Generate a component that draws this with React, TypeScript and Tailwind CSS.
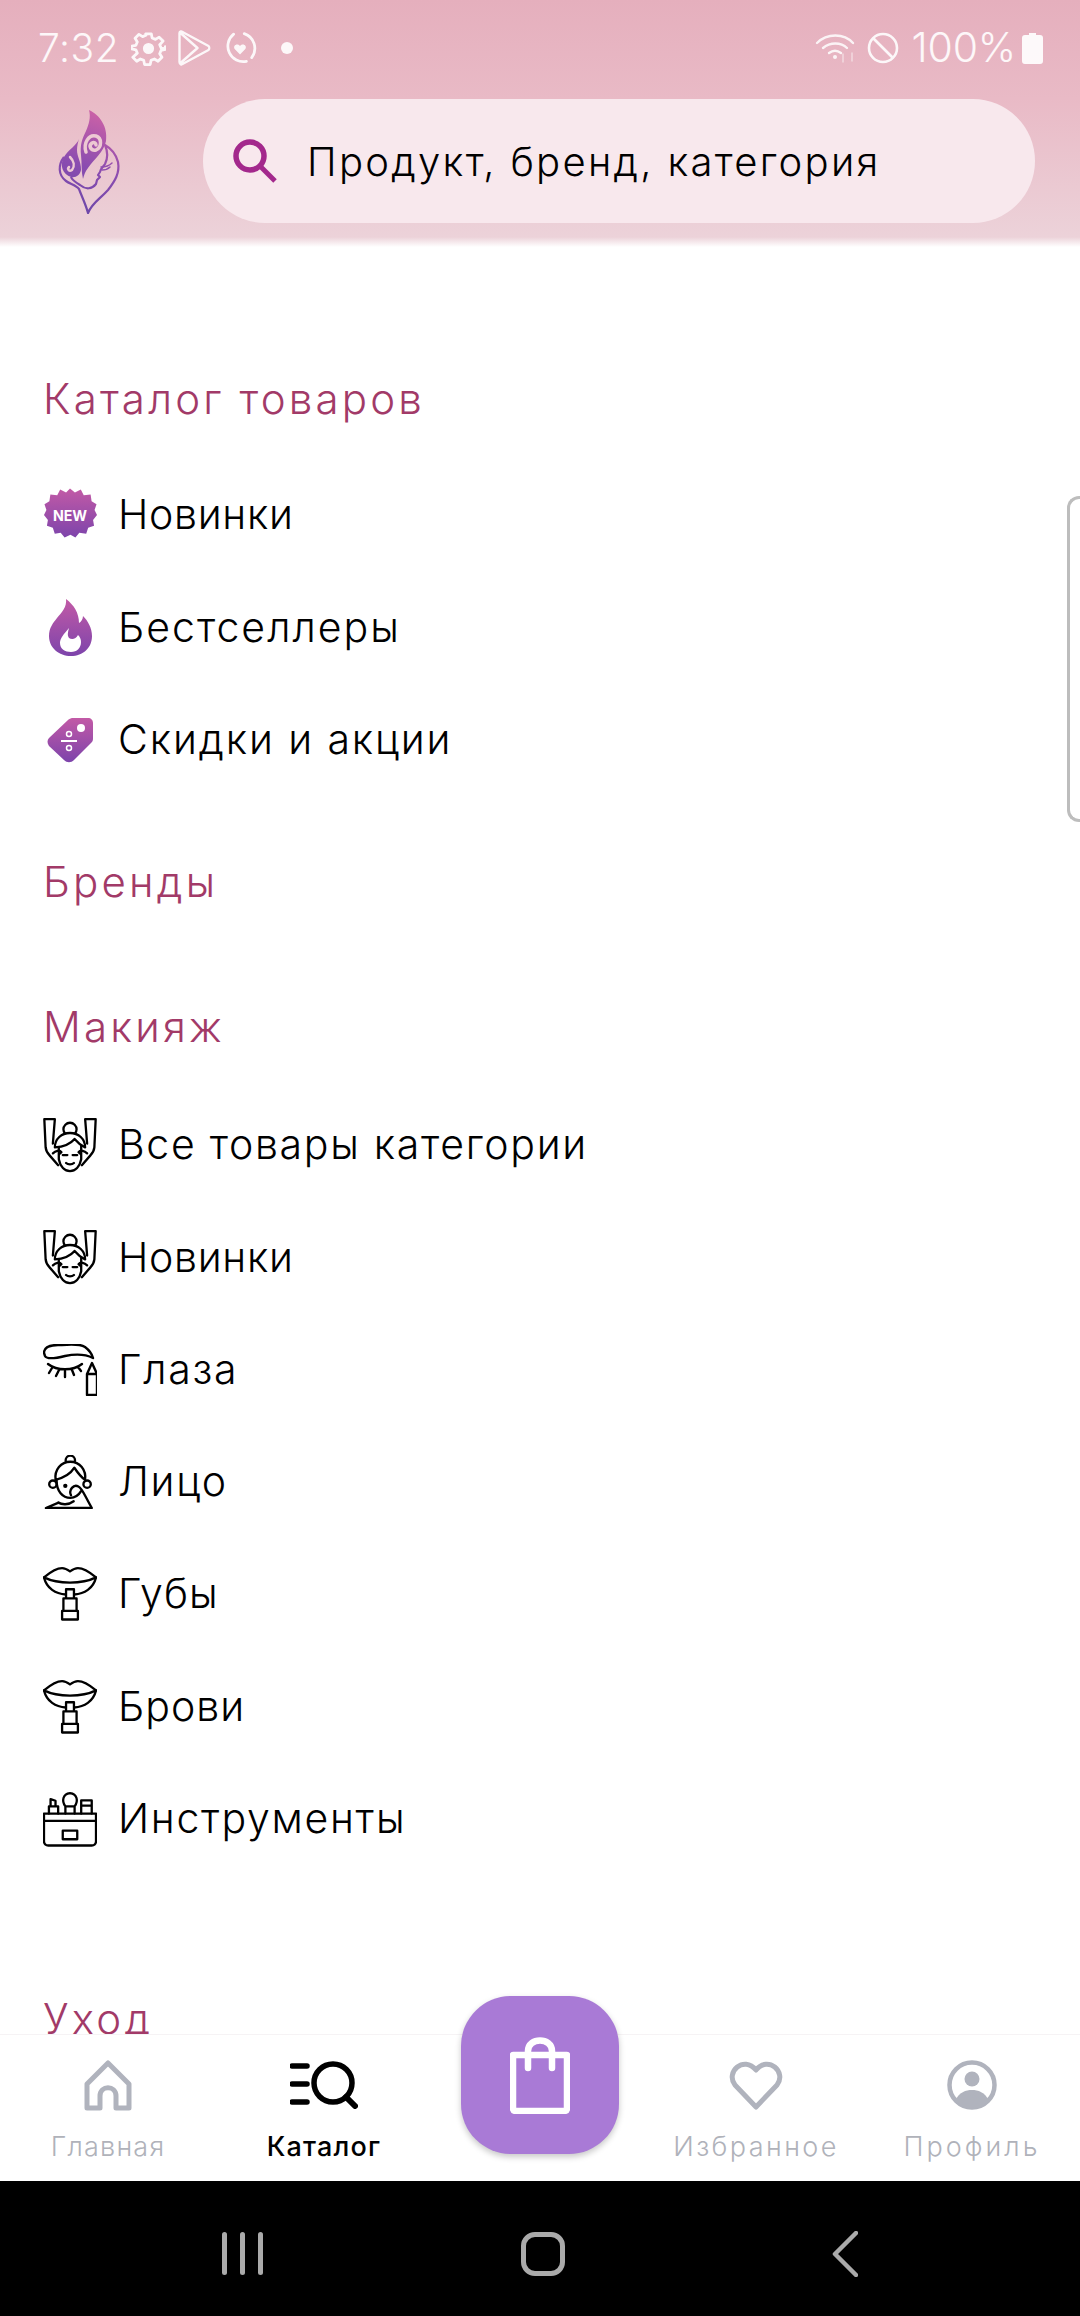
import type { ReactNode } from "react";

const FONT = "font-['Inter','Noto_Sans',sans-serif]";

function Gradient({ id }: { id: string }) {
  return (
    <defs>
      <linearGradient id={id} x1="0" y1="0" x2="0" y2="1">
        <stop offset="0" stopColor="#c25aa6" />
        <stop offset="1" stopColor="#7d44ab" />
      </linearGradient>
    </defs>
  );
}

function Logo() {
  return (
    <svg width="75" height="112" viewBox="0 0 75 112" fill="none" aria-hidden>
      <defs>
        <linearGradient id="logo" gradientUnits="userSpaceOnUse" x1="55" y1="5" x2="20" y2="108">
          <stop offset="0" stopColor="#d163a6" />
          <stop offset="0.55" stopColor="#8a4cb0" />
          <stop offset="1" stopColor="#6a47a8" />
        </linearGradient>
      </defs>
      {/* upper flame */}
      <path fill="url(#logo)" d="M39 5C50 10 58 22 56 36 54 47 44 54 38 63 35 67 34 70 33 74 31 66 32 58 31 50 30 40 32 34 36 26 39 19 41 12 39 5z" />
      <path stroke="#edc9d3" strokeWidth="3.500" strokeLinecap="round" d="M36 47C33 38 39 29 46 31 52 33 52 42 46 45 41 46 38 41 42 38 44 37 46 38 46 40" />
      {/* left petal */}
      <path fill="url(#logo)" d="M29 34C27 40 18 45 14 52 9 61 13 69 21 72 26 73 30 70 31 65 31 56 27 52 27 45 27 41 28 37 29 34z" />
      <path stroke="#edc9d3" strokeWidth="2.500" strokeLinecap="round" d="M20 52C24 56 25 61 22 65 19 67 17 64 19 62" />
      {/* outline and face */}
      <path stroke="url(#logo)" strokeWidth="2.200" strokeLinejoin="round" d="M14 52C8 60 8 70 16 76 20 79 26 80 29 84 32 92 36 100 38 108 42 98 50 94 58 85 65 76 70 68 68 57 66 49 62 44 55 40 58 47 58 53 55 59 53 62 50 64 50 67L48 70 50 72 47 75 46 79C42 84 36 85 30 80 25 77 22 75 21 72" />
      <path stroke="url(#logo)" strokeWidth="1.500" strokeLinecap="round" d="M51 62C55 62 59 61 62 58M52 65C55 65 58 64 60 62" />
    </svg>
  );
}

function Massage() {
  return (
    <svg width="55" height="56" viewBox="0 0 164 165" fill="none" stroke="#000" strokeWidth="7" strokeLinejoin="round" strokeLinecap="round" aria-hidden>
      <path d="M4 4h32l-6 74 M4 4l4 86c1 10 6 18 12 24l26 30 M160 4h-32l6 74 M160 4l-4 86c-1 10-6 18-12 24l-26 30" />
      <path d="M30 108c8-8 20-12 26 -4l-6 6 M134 108c-8-8-20-12-26-4l6 6" />
      <circle cx="82" cy="35" r="20" fill="#fff" />
      <path fill="#fff" d="M36 90c0-26 20-44 46-44s46 18 46 44c-12-6-22-14-32-26-12 14-34 24-60 26z" />
      <path d="M48 92v34c4 22 18 36 34 36s30-14 34-36V84" />
      <path d="M60 113h14M90 113h14M70 137c6 6 18 6 24 0" />
    </svg>
  );
}

function EyeBrow() {
  return (
    <svg width="54" height="52" viewBox="0 0 54 52" fill="none" stroke="#000" strokeWidth="2.400" strokeLinejoin="round" strokeLinecap="round" aria-hidden>
      <path d="M1 9C1 3 8 1 15 1 27 1 35-1 42 3 46 6 49 10 50 14 42 10 32 10 22 12 14 14 4 16 2 12z" />
      <path d="M5 20C14 27 30 27 39 20M9 24l-3 5M16 26l-3 6M22 27v6M29 26l2 5M35 23l3 4" />
      <path d="M44 30L49 19 54 30V51H44zM44 30H54" />
    </svg>
  );
}

function FaceIcon() {
  return (
    <svg width="52" height="54" viewBox="0 0 150 161" fill="none" stroke="#000" strokeWidth="7" strokeLinejoin="round" strokeLinecap="round" aria-hidden>
      <circle cx="76" cy="16" r="14" fill="#fff" />
      <path fill="#fff" d="M32 74c-4-30 16-54 44-54s48 24 44 54c-12-8-20-18-32-36-10 16-30 30-56 36z" />
      <path d="M35 76c0 32 18 52 41 52 16 0 26-10 32-20" />
      <circle cx="24" cy="87" r="11" />
      <circle cx="126" cy="87" r="11" />
      <circle cx="61" cy="92" r="3" fill="#000" />
      <path d="M78 120c-8-16 8-34 22-26 12 6 16 22 40 64H3l38-16" />
      <path d="M40 142c10 6 30 8 46-4" />
    </svg>
  );
}

function Lips() {
  return (
    <svg width="55" height="56" viewBox="0 0 164 165" fill="none" stroke="#000" strokeWidth="7" strokeLinejoin="round" strokeLinecap="round" aria-hidden>
      <path d="M3 32C20 18 40 4 58 4c10 0 16 4 24 10 8-6 14-10 24-10 18 0 38 14 55 28-24 12-55 16-79 16S27 44 3 32z" />
      <path d="M3 32c8 34 36 50 66 52h26c30-2 58-18 66-52" />
      <path d="M70 68h24v28H70zM62 96h40v38H62zM58 134h48v26H58z" fill="#fff" />
    </svg>
  );
}

function Brushes() {
  return (
    <svg width="55" height="56" viewBox="0 0 164 165" fill="none" stroke="#000" strokeWidth="7" strokeLinejoin="round" strokeLinecap="round" aria-hidden>
      <path d="M3 66h158v84c0 8-6 13-13 13H16c-7 0-13-5-13-13zM3 88h158" />
      <path d="M60 118h44v26H60z" />
      <path d="M18 66V44h28v22M23 44V22l15 5v17" />
      <path d="M68 66V44h28v22M68 44C56 28 60 6 82 4c22 2 26 24 14 40z" />
      <path d="M116 66V26h32v40M116 42h32" />
    </svg>
  );
}

function NewBadge() {
  return (
    <svg width="56" height="57" viewBox="0 0 55 57" aria-hidden>
      <Gradient id="g-new" />
      <path fill="url(#g-new)" d="M27.5 1l5 4 6-3 3 6 7-1 1 7 5 3-2 6 2.500 5-4 5 1 6-6 2-2 6-7-1-4 5-5-3-6 3-4-5-6 1-2-6-6-2 1-6-4-5 2.500-5-2-6 5-3 1-7 7 1 3-6 6 3z" />
      <text x="27.5" y="34" textAnchor="middle" fontSize="14.500" fontWeight="700" fill="#fff" fontFamily="Inter, sans-serif">NEW</text>
    </svg>
  );
}

function Fire() {
  return (
    <svg width="43" height="57" viewBox="0 0 43 57" aria-hidden>
      <Gradient id="g-fire" />
      <path fill="url(#g-fire)" fillRule="evenodd" d="M17 0c8 6 13 14 13 24 2-1 4-4 4-7 5 5 9 12 9 20 0 12-9 20-21 20S0 49 0 37c0-8 4-13 8-18 5-6 10-11 9-19zM20 29c-5 6-9 10-9 15 0 6 5 9 11 9s10-4 10-10c0-3-1-5-3-7-2 4-6 5-9 3-2-3-1-6 0-10z" />
    </svg>
  );
}

function Tag() {
  return (
    <svg width="46" height="46" viewBox="0 0 46 46" aria-hidden>
      <Gradient id="g-tag" />
      <path fill="url(#g-tag)" d="M25 1h16c3 0 5 2 5 5v15c0 2 0 3-2 5L27 43c-3 3-7 3-10 0L2 29c-2-3-2-6 0-8L21 3c1-1 3-2 4-2z" />
      <circle cx="34" cy="11" r="4" fill="#fff" />
      <circle cx="22" cy="17" r="2.500" fill="none" stroke="#fff" strokeWidth="1.500" />
      <circle cx="22" cy="31" r="2.500" fill="none" stroke="#fff" strokeWidth="1.500" />
      <path d="M14 24h16" stroke="#fff" strokeWidth="2" />
    </svg>
  );
}

function Heading({ children }: { children: ReactNode }) {
  return (
    <h2 className="flex h-[112px] items-center pl-[43px] text-[42px] font-light tracking-[3.200px] text-[#a23a68]">
      {children}
    </h2>
  );
}

function Row({ icon, label, spacing = "tracking-[1.7px]" }: { icon: ReactNode; label: string; spacing?: string }) {
  return (
    <div className="flex h-[112.3px] items-center pl-[43px]">
      <span className="mr-[21px] flex w-[54px] shrink-0 justify-center">{icon}</span>
      <span className={`text-[41px] font-light text-black ${spacing}`}>{label}</span>
    </div>
  );
}

function StatusBar() {
  return (
    <div className="flex h-[96px] items-center justify-between pr-[37px] pl-[38px] text-[39px] font-light text-white/90">
      <div className="flex items-center">
        <span className="tracking-[0.5px]">7:32</span>
        <svg className="ml-[12px]" width="35" height="35" viewBox="0 0 24 25" fill="none" stroke="#fff" strokeWidth="2" strokeLinejoin="round" opacity="0.9" aria-hidden>
          <path d="M10 2h4l.6 3 2.400 1 2.600-1.600 2.800 2.800L20 9.800l1 2.400 3 .6v-1.600 2l-3 .6-1 2.400 1.600 2.600-2.800 2.800-2.600-1.600-2.400 1-.6 3h-4l-.6-3-2.400-1-2.600 1.600-2.800-2.800L4 15.800l-1-2.400-3-.6v-2l3-.6 1-2.400-1.600-2.600L5.200 2.400 7.800 4l2.400-1z" />
          <circle cx="12" cy="12.500" r="3" fill="#fff" />
        </svg>
        <svg className="ml-[11px]" width="34" height="36" viewBox="0 0 33 36" fill="none" stroke="#fff" strokeWidth="2.400" strokeLinejoin="round" opacity="0.9" aria-hidden>
          <path d="M2 3c0-2 2-2 3-1l26 14c1 1 1 3 0 4L5 34c-1 1-3 0-3-2zM3 3l17 15L3 33M20 18l-8 7M20 18l-8-7" />
        </svg>
        <svg className="ml-[12px]" width="34" height="34" viewBox="0 0 32 32" fill="none" stroke="#fff" strokeWidth="2.600" strokeLinecap="round" opacity="0.9" aria-hidden>
          <path d="M20 2.500A14.500 14.500 0 0 1 27 25M22 28.500A14.500 14.500 0 0 1 10 3" />
          <path d="M16 22l-5-5c-2-3 2-6 5-3 3-3 7 0 5 3z" fill="#fff" stroke="none" />
        </svg>
        <span className="ml-[24px] h-[12px] w-[12px] rounded-full bg-white/90" />
      </div>
      <div className="flex items-center">
        <svg width="44" height="32" viewBox="0 0 42 32" fill="none" stroke="#fff" strokeWidth="2.400" strokeLinecap="round" opacity="0.85" aria-hidden>
          <path d="M1 11c10-10 27-10 36 0M7 16c7-6 18-6 24 0M13 21c4-3 8-3 12 0" />
          <circle cx="19" cy="25" r="2" fill="#fff" stroke="none" />
          <path d="M27 22v8M36 21v8" strokeWidth="1.600" opacity="0.55" />
        </svg>
        <svg className="ml-[8px]" width="32" height="32" viewBox="0 0 32 32" fill="none" stroke="#fff" strokeWidth="2.600" opacity="0.9" aria-hidden>
          <circle cx="16" cy="16" r="14" />
          <path d="M6 6l20 20" />
        </svg>
        <span className="ml-[13px] text-[41px] tracking-[-0.2px]">100%</span>
        <svg className="ml-[6px]" width="21" height="31" viewBox="0 0 21 31" aria-hidden>
          <path fill="#fff" opacity="0.92" d="M7 0h7v2h4c2 0 3 1 3 3v23c0 2-1 3-3 3H3c-2 0-3-1-3-3V5c0-2 1-3 3-3h4z" />
        </svg>
      </div>
    </div>
  );
}

function Header() {
  return (
    <header className="h-[247px] shrink-0 bg-[linear-gradient(#e5afbd_0%,#e9bac6_40%,#ecd2d9_96%,#ffffff_100%)]">
      <StatusBar />
      <div className="mt-[3px] flex items-center pr-[45px]">
        <div className="flex h-[124px] w-[203px] shrink-0 items-center pl-[50px]">
          <Logo />
        </div>
        <div className="flex h-[124px] flex-1 items-center rounded-full bg-[#f8e8ed] pl-[30px]">
          <svg width="44" height="44" viewBox="0 0 44 44" fill="none" stroke="#a3288c" aria-hidden>
            <circle cx="17" cy="17" r="14" strokeWidth="5.500" />
            <path d="M27 27l15 15" strokeWidth="5" />
          </svg>
          <span className="ml-[30px] pt-[2px] text-[40px] font-light tracking-[2.3px] text-black">Продукт, бренд, категория</span>
        </div>
      </div>
    </header>
  );
}

function NavItem({ icon, label, color }: { icon: ReactNode; label: string; color: string }) {
  return (
    <div className="flex flex-col items-center">
      <div className="flex h-[52px] items-center">{icon}</div>
      <span className={`mt-[19px] text-[27px] leading-[34px] ${color}`}>{label}</span>
    </div>
  );
}

function BottomNav() {
  return (
    <nav className="relative grid h-[147px] shrink-0 grid-cols-5 border-t border-[#f6f3f5] bg-white pt-[24px]">
      <NavItem
        label="Главная"
        color="font-light tracking-[1.200px] text-[#b0b2ba]"
        icon={
          <svg width="48" height="51" viewBox="0 0 48 51" fill="none" stroke="#b0b3bd" strokeWidth="5" strokeLinejoin="round" aria-hidden>
            <path d="M24 3L3 24v24h13V36c0-11 16-11 16 0v12h13V24z" />
          </svg>
        }
      />
      <NavItem
        label="Каталог"
        color="font-medium tracking-[1.200px] text-black"
        icon={
          <svg width="68" height="48" viewBox="0 0 68 48" fill="none" stroke="#000" strokeLinecap="round" aria-hidden>
            <path d="M2 5h15M2 23h15M2 41h15" strokeWidth="5.500" />
            <circle cx="43" cy="22" r="19" strokeWidth="5.500" />
            <path d="M56 36l9 9" strokeWidth="6" />
          </svg>
        }
      />
      <div />
      <NavItem
        label="Избранное"
        color="font-light tracking-[2.400px] text-[#b0b2ba]"
        icon={
          <svg width="54" height="50" viewBox="0 0 54 50" fill="none" stroke="#b0b3bd" strokeWidth="5" strokeLinejoin="round" aria-hidden>
            <path d="M27 47L6 25C-4 12 15-5 27 10 39-5 58 12 48 25z" />
          </svg>
        }
      />
      <NavItem
        label="Профиль"
        color="font-light tracking-[3px] text-[#b0b2ba]"
        icon={
          <svg width="50" height="50" viewBox="0 0 50 50" fill="none" aria-hidden>
            <circle cx="25" cy="25" r="22.500" stroke="#b0b3bd" strokeWidth="4.500" />
            <circle cx="25" cy="19" r="7.500" fill="#b0b3bd" />
            <path fill="#b0b3bd" d="M8 41c4-9 11-11 17-11s13 2 17 11c-4 5-11 8-17 8S12 46 8 41z" />
          </svg>
        }
      />
      <div className="absolute top-[-39px] left-[461px] flex h-[158px] w-[158px] items-center justify-center rounded-[50px] bg-[#a97ad6] shadow-[0_3px_6px_rgba(0,0,0,0.22)]">
        <svg width="60" height="77" viewBox="0 0 60 77" fill="none" stroke="#fff" strokeWidth="6.500" strokeLinecap="round" strokeLinejoin="round" aria-hidden>
          <path d="M3 18h54v53c0 2-1 3-3 3H6c-2 0-3-1-3-3z" />
          <path d="M18 31V14c0-14 24-14 24 0v17" />
        </svg>
      </div>
    </nav>
  );
}

function SystemBar() {
  return (
    <div className="flex h-[135px] shrink-0 items-center bg-black pt-[10px] pl-[222px]">
      <div className="flex gap-[13px]">
        <span className="h-[43px] w-[5px] rounded-sm bg-[#aaaaaa]" />
        <span className="h-[43px] w-[5px] rounded-sm bg-[#aaaaaa]" />
        <span className="h-[43px] w-[5px] rounded-sm bg-[#aaaaaa]" />
      </div>
      <span className="ml-[258px] h-[44px] w-[44px] rounded-[14px] border-[5px] border-[#aaaaaa]" />
      <svg className="ml-[267px]" width="26" height="46" viewBox="0 0 26 46" fill="none" stroke="#aaaaaa" strokeWidth="4.500" strokeLinecap="round" strokeLinejoin="round" aria-hidden>
        <path d="M24 2L3 23l21 21" />
      </svg>
    </div>
  );
}

export default function App() {
  return (
    <div className={`relative flex h-[2316px] w-[1080px] flex-col overflow-hidden bg-white ${FONT}`}>
      <Header />
      <main className="min-h-0 flex-1 overflow-hidden pt-[95px]">
        <Heading>Каталог товаров</Heading>
        <div className="mt-[5px]">
          <Row icon={<NewBadge />} label="Новинки" spacing="tracking-[0.7px]" />
          <Row icon={<Fire />} label="Бестселлеры" spacing="tracking-[2px]" />
          <Row icon={<Tag />} label="Скидки и акции" spacing="tracking-[1.900px]" />
        </div>
        <div className="mt-[30px]">
          <Heading>Бренды</Heading>
        </div>
        <div className="mt-[33px]">
          <Heading>Макияж</Heading>
        </div>
        <div className="mt-[6px]">
          <Row icon={<Massage />} label="Все товары категории" />
          <Row icon={<Massage />} label="Новинки" spacing="tracking-[0.7px]" />
          <Row icon={<EyeBrow />} label="Глаза" />
          <Row icon={<FaceIcon />} label="Лицо" />
          <Row icon={<Lips />} label="Губы" spacing="tracking-[1px]" />
          <Row icon={<Lips />} label="Брови" spacing="tracking-[1px]" />
          <Row icon={<Brushes />} label="Инструменты" />
        </div>
        <div className="mt-[88px]">
          <Heading>Уход</Heading>
        </div>
      </main>
      <BottomNav />
      <SystemBar />
      <div className="absolute top-[496px] right-0 h-[326px] w-[13px] rounded-l-[12px] border-y-[3px] border-l-[3px] border-[#bdbdbd]" />
    </div>
  );
}
